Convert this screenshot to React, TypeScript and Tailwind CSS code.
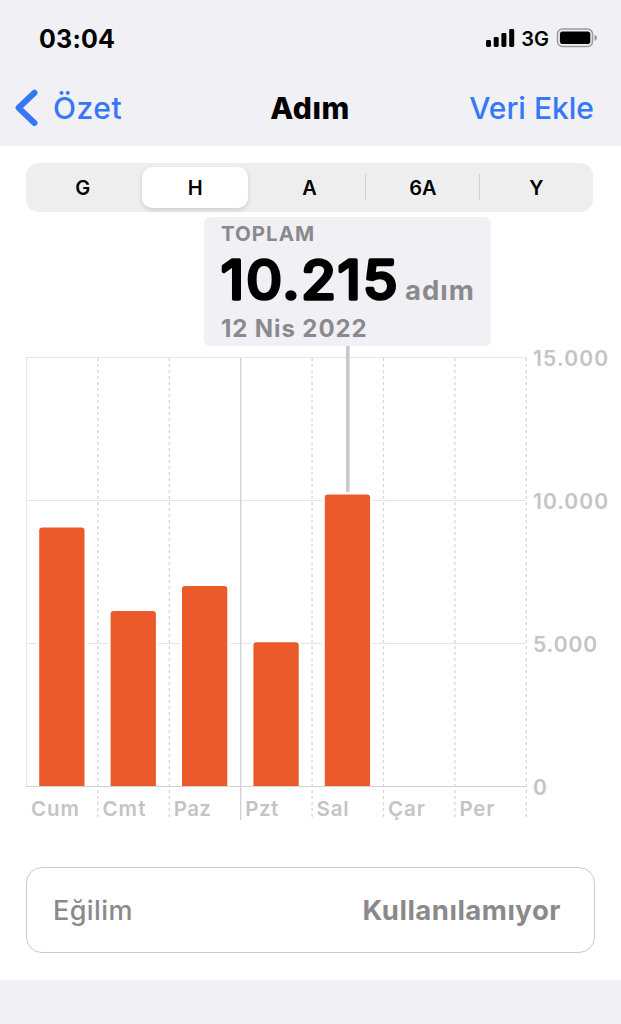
const ranges = ["G", "H", "A", "6A", "Y"];

const days = [
  { label: "Cum", top: 181.5, width: 48 },
  { label: "Cmt", top: 265, width: 43 },
  { label: "Paz", top: 240, width: 37 },
  { label: "Pzt", top: 296.3, width: 33 },
  { label: "Sal", top: 148.5, width: 32 },
  { label: "Çar", top: null, width: 37 },
  { label: "Per", top: null, width: 35 },
];

const levels = [
  { label: "15.000", y: 11.5, width: 75 },
  { label: "10.000", y: 154.5, width: 75 },
  { label: "5.000", y: 297.5, width: 64 },
  { label: "0", y: 440.5, width: 13 },
];

const LEFT = 26.5;
const STEP = 71.4;

function StatusBar() {
  return (
    <div className="flex h-[76px] items-center justify-between pl-[39px] pr-[23px]">
      <span className="mt-[2px] text-[25px] font-bold leading-none tracking-[0.2px]">03:04</span>
      <div className="flex items-center">
        <svg width="30" height="20" viewBox="0 0 30 20">
          <rect x="1" y="12" width="5" height="7" rx="1.4" />
          <rect x="8.7" y="9" width="5" height="10" rx="1.4" />
          <rect x="16.4" y="5" width="5" height="14" rx="1.4" />
          <rect x="24.2" y="1" width="5" height="18" rx="1.4" />
        </svg>
        <span className="ml-[6px] mt-[2px] text-[20px] font-semibold leading-none">3G</span>
        <svg className="ml-[7px]" width="42" height="20" viewBox="0 0 42 20">
          <rect x="1.5" y="1" width="35" height="17.5" rx="5" fill="none" stroke="#9b9b9f" strokeWidth="1.5" />
          <rect x="3.9" y="3.4" width="30.4" height="12.7" rx="2.8" />
          <path d="M38.5 6.8c2 .6 2.4 1.7 2.4 3s-.4 2.4-2.4 3z" fill="#9b9b9f" />
        </svg>
      </div>
    </div>
  );
}

function NavBar() {
  return (
    <div className="grid h-[70px] grid-cols-3 items-center pb-[6px] pl-[14px] pr-[27px] text-[30px] leading-none">
      <button className="flex items-center text-[#3478f6]">
        <svg width="25" height="40" viewBox="0 0 25 40" fill="none">
          <path d="M20.5 4.7 4.6 19.8 20.5 35" stroke="currentColor" strokeWidth="6" strokeLinecap="round" strokeLinejoin="round" />
        </svg>
        <span className="ml-[14px] font-medium tracking-[0.5px]">Özet</span>
      </button>
      <h1 className="pl-[12px] text-center font-extrabold tracking-[0.5px]">Adım</h1>
      <button className="whitespace-nowrap text-right font-medium text-[#3478f6]">Veri Ekle</button>
    </div>
  );
}

function RangePicker() {
  return (
    <div className="ml-[26px] mr-[28px] mt-[17px] grid h-[49px] grid-cols-5 rounded-[13px] bg-[#eeeeee]">
      {ranges.map((r, i) => (
        <button key={r} className="relative p-[4px] text-[20px] font-semibold leading-none">
          {i > 2 && <span className="absolute left-[-1px] top-[11px] h-[26px] w-px bg-[#cfcfd1]" />}
          <span
            className={
              r === "H"
                ? "mr-px ml-[-1px] flex h-full items-center justify-center rounded-[10px] bg-white shadow-[0_2px_5px_rgba(0,0,0,0.14)]"
                : "flex h-full items-center justify-center"
            }
          >
            {r}
          </span>
        </button>
      ))}
    </div>
  );
}

function Summary() {
  return (
    <div className="ml-[204px] mt-[5px] h-[129px] w-[287px] rounded-[6px] bg-[#f1f0f5] pl-[17px] text-[#8a8a8e]">
      <p className="pt-[6px] text-[20.5px] font-bold leading-[21px] tracking-[1px]">TOPLAM</p>
      <div className="flex h-[71px] items-end">
        <svg width="178" height="74" viewBox="0 0 178 74" className="mb-[-4px] shrink-0">
          <text
            x="0"
            y="54"
            transform="scale(1.07 1)"
            textLength="165"
            fontSize="53"
            strokeWidth="3.6"
            strokeLinejoin="round"
            className="fill-black stroke-black font-normal"
          >
            10.215
          </text>
        </svg>
        <span className="mb-[8px] ml-[6px] text-[27.5px] font-bold leading-[34px] tracking-[1px]">adım</span>
      </div>
      <p className="pt-px text-[24px] font-bold leading-[26px] tracking-[0.9px]">12 Nis 2022</p>
    </div>
  );
}

function Chart() {
  return (
    <svg width="621" height="480" viewBox="0 0 621 480" className="block">
      {levels.map((l) => (
        <g key={l.label}>
          <line x1="26" x2="526" y1={l.y} y2={l.y} stroke={l.y > 400 ? "#d2d2d4" : "#e5e5e7"} />
          <text x="533" y={l.y + 8.5} textLength={l.width} fontSize="21" fill="#c4c4c6" className="font-semibold">
            {l.label}
          </text>
        </g>
      ))}
      {[0, 1, 2, 3, 4, 5, 6, 7].map((i) => (
        <line
          key={i}
          x1={LEFT + i * STEP}
          x2={LEFT + i * STEP}
          y1="12"
          y2={i === 0 ? 440 : 474}
          stroke={i === 0 ? "#e8e8ea" : i === 3 ? "#cdcdcf" : "#d4d4d6"}
          strokeWidth="1.2"
          strokeDasharray={i === 0 || i === 3 ? undefined : "3 3"}
        />
      ))}
      {days.map((d, i) => (
        <g key={d.label}>
          {d.top !== null && (
            <path
              d={`M${39.2 + i * STEP} 440V${d.top + 3}q0-3 3-3h39.3q3 0 3 3V440z`}
              fill="#ea5a2a"
              stroke="#fff"
              strokeWidth="5"
              paintOrder="stroke"
            />
          )}
          <text x={31 + i * STEP} y="469.5" textLength={d.width} fontSize="20.5" fill="#c4c4c6" className="font-semibold">
            {d.label}
          </text>
        </g>
      ))}
      <line x1="26" x2="526" y1="440.5" y2="440.5" stroke="#d2d2d4" />
      <rect x="346" y="0" width="3.6" height="146" fill="#c9c9cb" />
    </svg>
  );
}

export default function App() {
  return (
    <div className="h-[1024px] w-[621px] overflow-hidden bg-[#f1f0f5] font-['Inter',sans-serif] text-black">
      <StatusBar />
      <NavBar />
      <main className="flex h-[834px] flex-col bg-white">
        <RangePicker />
        <Summary />
        <Chart />
        <div className="mx-[26px] mt-[41px] flex h-[86px] items-center justify-between rounded-[16px] border-[1.5px] border-[#cbcbcd] pl-[26px] pr-[33px] text-[27px] leading-none text-[#8a8a8c]">
          <span className="font-medium tracking-[0.4px]">Eğilim</span>
          <span className="mt-[2px] text-[27.5px] font-bold tracking-[0.5px]">Kullanılamıyor</span>
        </div>
      </main>
    </div>
  );
}
